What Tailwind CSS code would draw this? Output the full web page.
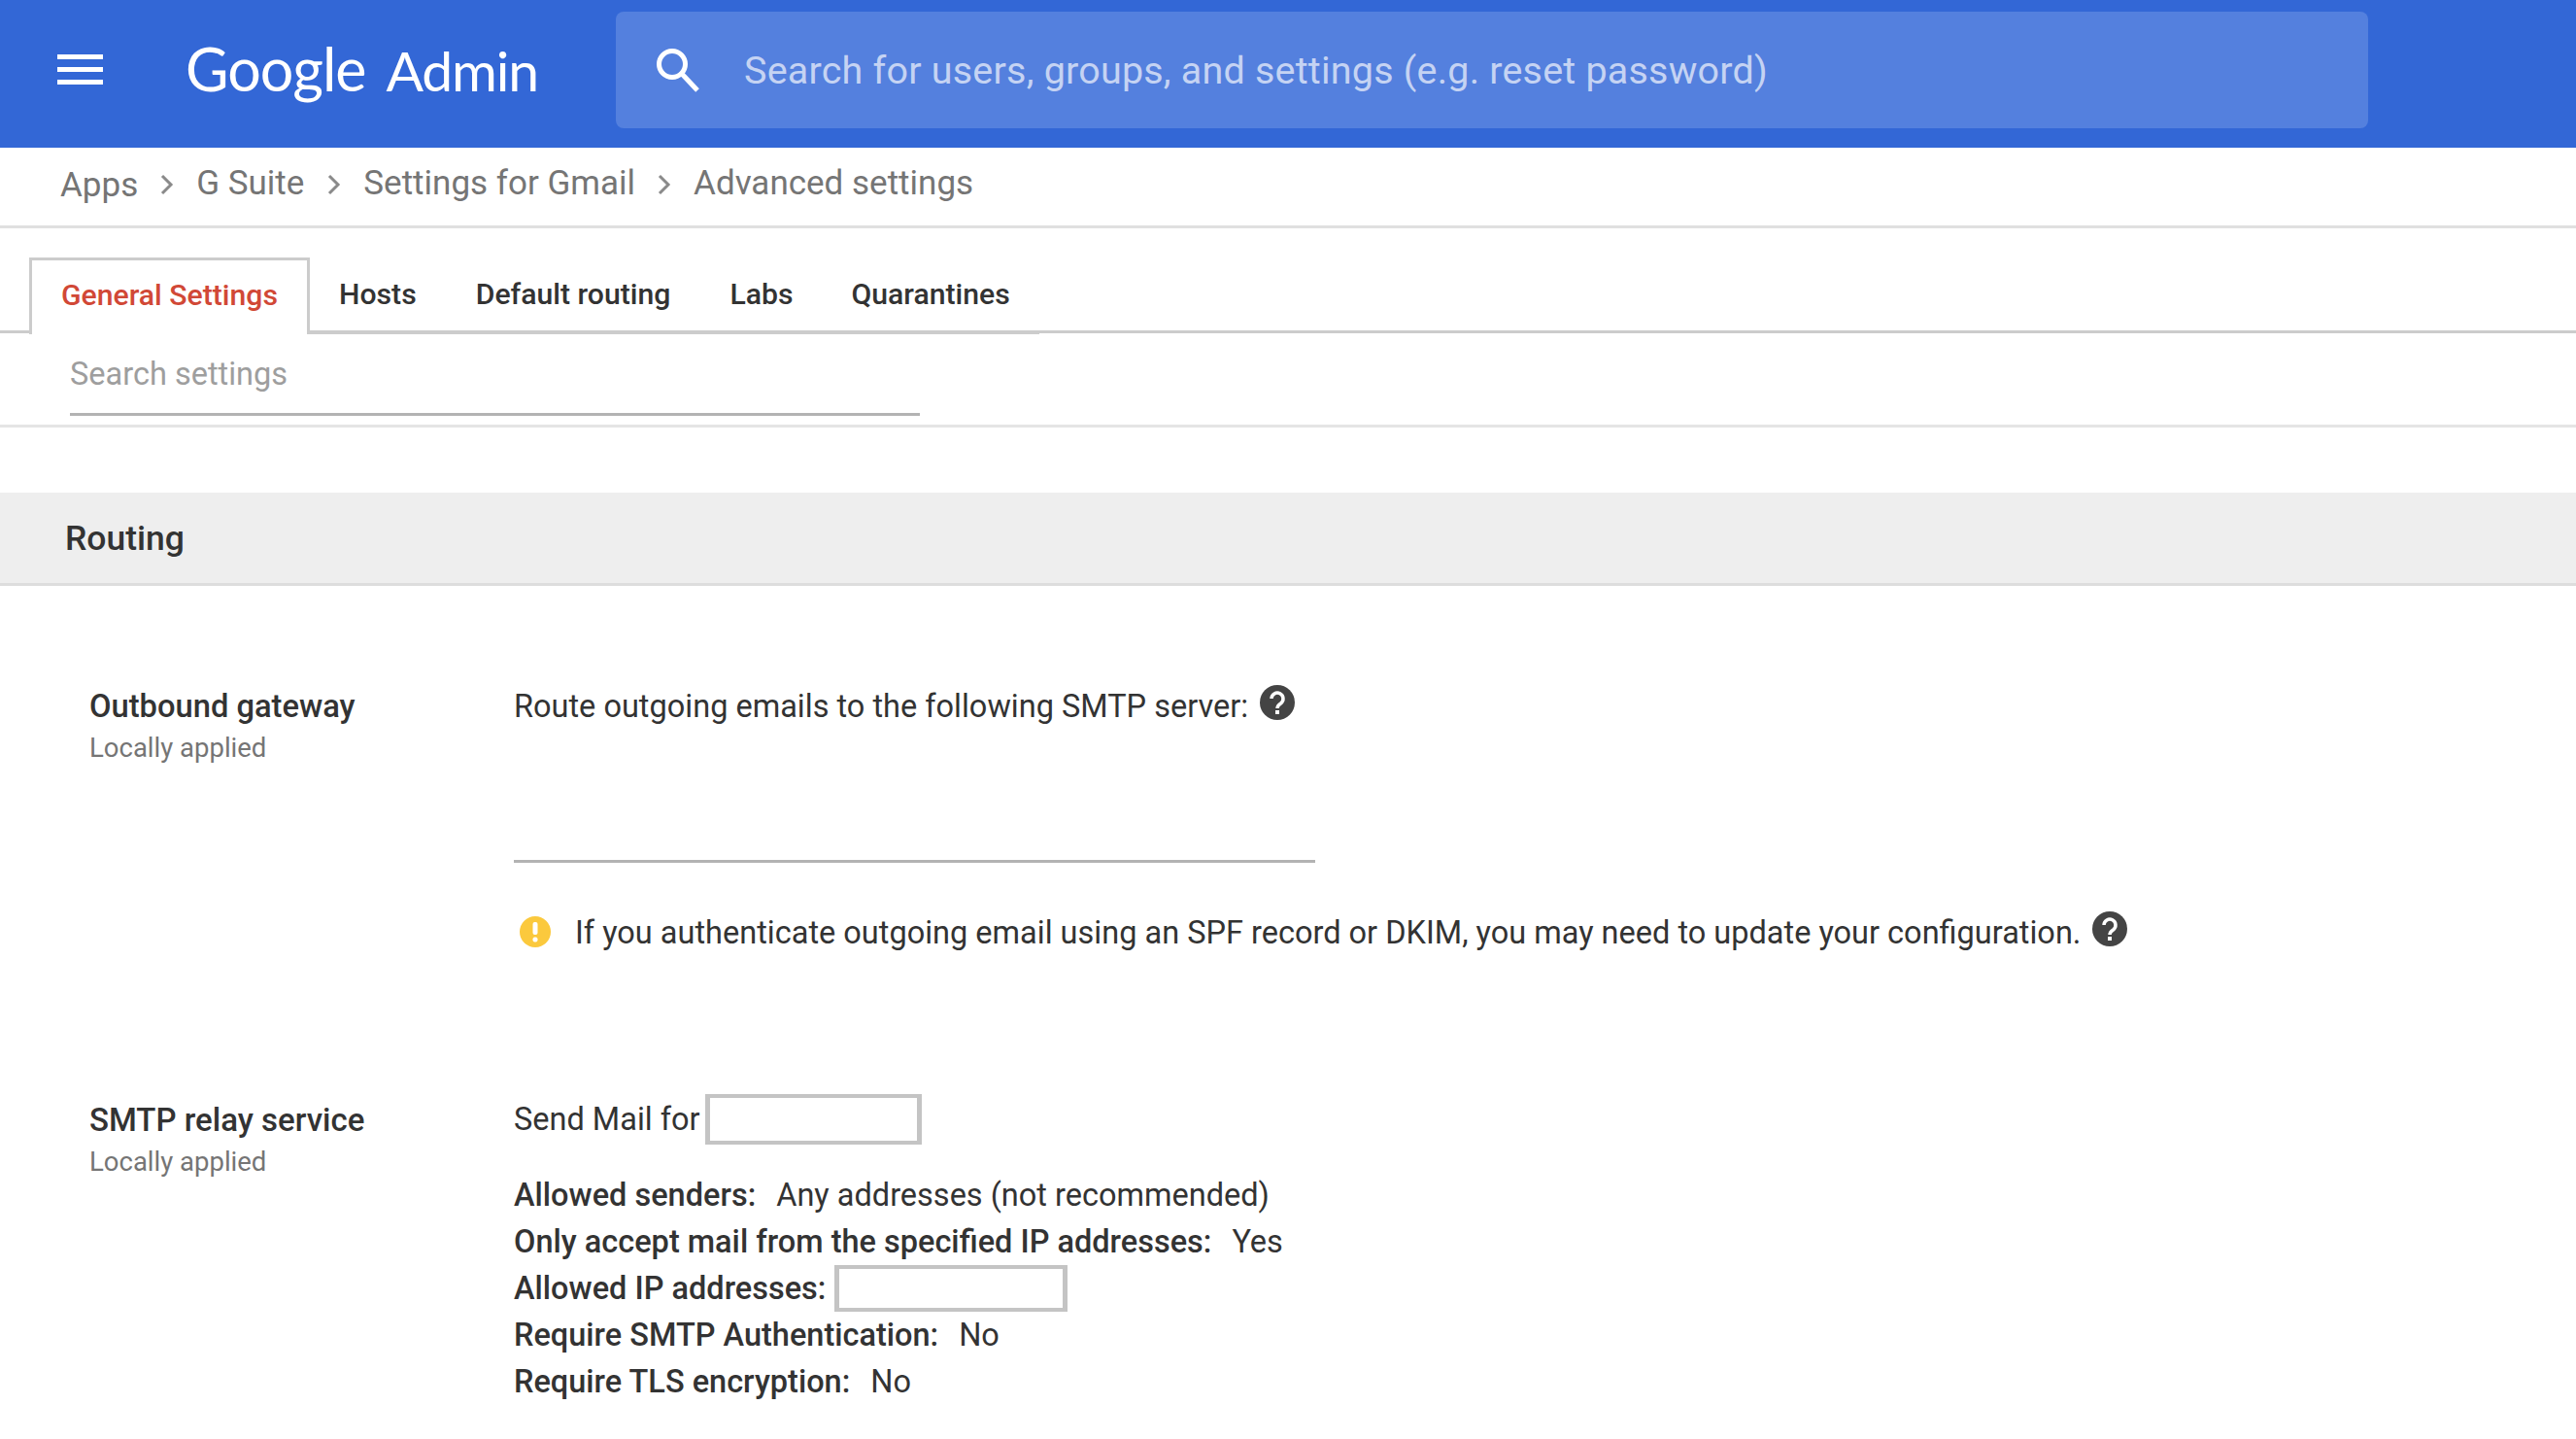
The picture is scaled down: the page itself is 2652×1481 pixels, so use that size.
<!DOCTYPE html>
<html lang="en">
<head>
<meta charset="UTF-8">
<title>Google Admin - Advanced settings</title>
<script src="https://cdn.jsdelivr.net/npm/@tailwindcss/browser@4"></script>
</head>
<body class="bg-white font-['Roboto',sans-serif] text-[#333] overflow-hidden">
<div class="w-[2652px] h-[1481px] overflow-hidden">

  <!-- Header -->
  <header class="h-[152px] bg-[#3367d6] flex items-center pb-[8px]">
    <svg class="ml-[59px] w-[47px] h-[32px] shrink-0" viewBox="0 0 47 32" fill="#fff"><rect y="0" width="47" height="5"/><rect y="13" width="47" height="5"/><rect y="26" width="47" height="5"/></svg>
    <div class="ml-[85px] mb-[3px] w-[443px] shrink-0 text-white font-['Lato',sans-serif] leading-none flex items-baseline gap-[21px]">
      <span class="text-[61px] tracking-[-1px]">Google</span><span class="text-[57px] tracking-[-1.2px]">Admin</span>
    </div>
    <div class="w-[1804px] h-[120px] rounded-[8px] bg-[#5480de] flex items-center">
      <svg class="ml-[40px] w-[48px] h-[48px] shrink-0" viewBox="0 0 48 48" fill="none" stroke="#fff" stroke-width="5"><circle cx="18" cy="18" r="13.5"/><path d="M28 28 L44 45"/></svg>
      <span class="ml-[44px] mt-[2px] text-[39.5px] text-[#c5d3f3] tracking-[0.2px]">Search for users, groups, and settings (e.g. reset password)</span>
    </div>
  </header>

  <!-- Breadcrumb -->
  <nav class="h-[83px] border-b-[3px] border-[#e0e0e0] pl-[62px] flex items-center text-[35px] text-[#757575] pb-[5px]">
    <span class="pt-[3px]">Apps</span>
    <svg class="mx-[23px] w-[14px] h-[22px]" viewBox="0 0 14 22" fill="none" stroke="#8a8a8a" stroke-width="3"><path d="M2 2 L11 11 L2 20"/></svg>
    <span class="mr-[1px]">G Suite</span>
    <svg class="mx-[23px] w-[14px] h-[22px]" viewBox="0 0 14 22" fill="none" stroke="#8a8a8a" stroke-width="3"><path d="M2 2 L11 11 L2 20"/></svg>
    <span>Settings for Gmail</span>
    <svg class="mx-[23px] w-[14px] h-[22px]" viewBox="0 0 14 22" fill="none" stroke="#8a8a8a" stroke-width="3"><path d="M2 2 L11 11 L2 20"/></svg>
    <span>Advanced settings</span>
  </nav>

  <!-- Tabs -->
  <div class="mt-[30px] h-[78px] border-b-[3px] border-[#ccc] pl-[30px] flex items-start text-[30.2px] font-medium">
    <div class="h-[79px] pl-[30px] pr-[30px] pb-[5px] border-[3px] border-b-0 border-[#ccc] bg-white text-[#d14836] flex items-center">General Settings</div>
    <div class="h-[79px] border-b-[3px] border-[#ccc] flex items-stretch">
      <div class="px-[30px] flex items-center">Hosts</div>
      <div class="px-[31px] flex items-center">Default routing</div>
      <div class="px-[30px] flex items-center">Labs</div>
      <div class="px-[30px] flex items-center">Quarantines</div>
    </div>
  </div>

  <!-- Search settings -->
  <div class="h-[97px] border-b-[3px] border-[#e5e5e5] pl-[72px]">
    <div class="w-[875px] h-[85px] border-b-[3px] border-[#b3b3b3] flex items-center pt-[2px] text-[32.5px] text-[#9e9e9e]">Search settings</div>
  </div>

  <!-- Routing band -->
  <div class="mt-[67px] h-[96px] bg-[#eee] border-b-[3px] border-[#ddd] pl-[67px] pt-[2px] flex items-center text-[35.5px] font-medium">Routing</div>

  <!-- Outbound gateway -->
  <section class="mt-[99px] pl-[92px] flex">
    <div class="w-[437px] shrink-0 pt-[1px]">
      <div class="text-[32.7px] leading-[48px] font-medium">Outbound gateway</div>
      <div class="text-[27.5px] leading-[38px] text-[#757575]">Locally applied</div>
    </div>
    <div>
      <div class="flex items-start h-[48px] text-[32.5px] leading-[50px]">
        <span>Route outgoing emails to the following SMTP server:</span>
        <svg class="ml-[12px] mt-[3px] w-[36px] h-[36px]" viewBox="0 0 36 36"><circle cx="18" cy="18" r="18" fill="#444"/><path d="M12 14 a6 6 0 1 1 9.5 5 c-2.500 1.700 -3.500 2.700 -3.500 5" fill="none" stroke="#fff" stroke-width="3.500"/><rect x="16" y="26" width="4" height="4" fill="#fff"/></svg>
      </div>
      <div class="mt-[135px] w-[825px] border-b-[3px] border-[#b3b3b3]"></div>
      <div class="mt-[47px] flex items-start h-[48px] text-[32.5px] leading-[50px]">
        <svg class="ml-[6px] mt-[8px] w-[32px] h-[32px]" viewBox="0 0 32 32"><circle cx="16" cy="16" r="16" fill="#fbc93d"/><rect x="13.500" y="6" width="5" height="13" rx="2" fill="#fff"/><rect x="13.500" y="21.500" width="5" height="5" rx="2" fill="#fff"/></svg>
        <span class="ml-[25px]">If you authenticate outgoing email using an SPF record or DKIM, you may need to update your configuration.</span>
        <svg class="ml-[12px] mt-[3px] w-[36px] h-[36px]" viewBox="0 0 36 36"><circle cx="18" cy="18" r="18" fill="#444"/><path d="M12 14 a6 6 0 1 1 9.5 5 c-2.500 1.700 -3.500 2.700 -3.500 5" fill="none" stroke="#fff" stroke-width="3.500"/><rect x="16" y="26" width="4" height="4" fill="#fff"/></svg>
      </div>
    </div>
  </section>

  <!-- SMTP relay service -->
  <section class="mt-[145px] pl-[92px] flex">
    <div class="w-[437px] shrink-0 pt-[1px]">
      <div class="text-[33px] leading-[48px] font-medium">SMTP relay service</div>
      <div class="text-[27.5px] leading-[38px] text-[#757575]">Locally applied</div>
    </div>
    <div class="text-[32.5px]">
      <div class="flex items-center h-[48px]">
        <span>Send Mail for</span>
        <div class="ml-[5px] w-[223px] h-[52px] border-x-[5px] border-y-[4px] border-[#c4c4c4]"></div>
      </div>
      <div class="mt-[30px] leading-[48px]">
        <div><span class="font-medium">Allowed senders:</span><span class="ml-[21px]">Any addresses (not recommended)</span></div>
        <div><span class="font-medium">Only accept mail from the specified IP addresses:</span><span class="ml-[21px]">Yes</span></div>
        <div class="flex items-center h-[48px]"><span class="font-medium">Allowed IP addresses:</span><div class="ml-[9px] w-[240px] h-[48px] border-x-[5px] border-y-[4px] border-[#c4c4c4]"></div></div>
        <div><span class="font-medium">Require SMTP Authentication:</span><span class="ml-[21px]">No</span></div>
        <div><span class="font-medium">Require TLS encryption:</span><span class="ml-[21px]">No</span></div>
      </div>
    </div>
  </section>
</div>
</body>
</html>
